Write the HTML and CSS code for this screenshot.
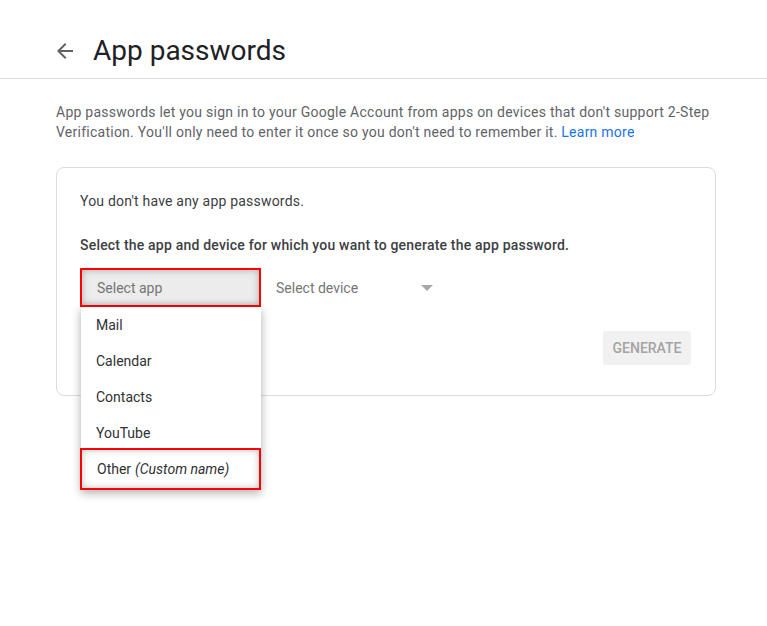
FILE: index.html
```html
<!DOCTYPE html>
<html>
<head>
<meta charset="utf-8">
<link rel="stylesheet" href="styles.css">
</head>
<body>
<header class="topbar">
  <svg class="back" width="24" height="24" viewBox="0 0 24 24"><path d="M20 11H7.83l5.59-5.59L12 4l-8 8 8 8 1.41-1.41L7.83 13H20v-2z" fill="#5f6368"/></svg>
  <h1 class="title">App passwords</h1>
</header>
<main class="content">
  <p class="intro">App passwords let you sign in to your Google Account from apps on devices that don't support 2-Step Verification. You'll only need to enter it once so you don't need to remember it. <a class="link" href="#">Learn more</a></p>
  <section class="card">
    <p class="none">You don't have any app passwords.</p>
    <p class="instr">Select the app and device for which you want to generate the app password.</p>
    <div class="selects">
      <div class="appsel">
        <div class="appbox">Select app</div>
        <ul class="menu">
          <li class="item">Mail</li>
          <li class="item">Calendar</li>
          <li class="item">Contacts</li>
          <li class="item">YouTube</li>
          <li class="item other">Other <em class="custom">(Custom name)</em></li>
        </ul>
      </div>
      <div class="devsel">
        <span>Select device</span>
        <span class="caret"></span>
      </div>
    </div>
    <div class="actions">
      <button class="gen">GENERATE</button>
    </div>
  </section>
</main>
</body>
</html>
```
FILE: styles.css
```css
* { box-sizing: border-box; }
html, body { min-height: 100%; height: 100%; }
body {
  margin: 0;
  font-family: Roboto, "Liberation Sans", Arial, sans-serif;
  background: #fff;
  color: #3c4043;
}
.topbar {
  height: 79px;
  display: flex;
  align-items: center;
  padding: 24px 0 0 53px;
  border-bottom: 1px solid #dadce0;
}
.back { display: block; }
.title {
  margin: 0 0 0 16px;
  font-size: 28px;
  font-weight: 400;
  color: #202124;
  line-height: 36px;
}
.content {
  padding: 0 51px 0 56px;
}
.intro {
  margin: 23px 0 25px;
  font-size: 14px;
  line-height: 20px;
  letter-spacing: 0.25px;
  color: #5f6368;
}
.link { color: #1a73e8; text-decoration: none; }
.card {
  border: 1px solid #dadce0;
  border-radius: 8px;
  padding: 23px 24px 30px 23px;
}
.none {
  margin: 0;
  font-size: 14px;
  line-height: 20px;
  letter-spacing: 0.2px;
  color: #3c4043;
}
.instr {
  margin: 24px 0 0;
  font-size: 14px;
  line-height: 20px;
  letter-spacing: 0.2px;
  font-weight: 500;
  color: #3c4043;
}
.selects {
  margin-top: 13px;
  display: flex;
  align-items: center;
}
.appsel {
  position: relative;
  width: 181px;
}
.appbox {
  height: 39px;
  border: 2px solid #f00;
  background: #ececec;
  box-shadow: inset 0 0 7px rgba(0,0,0,0.28);
  padding-left: 15px;
  display: flex;
  align-items: center;
  font-size: 14px;
  color: #757575;
}
.menu {
  position: absolute;
  top: 39px;
  left: 1px;
  width: 180px;
  margin: 0;
  padding: 0;
  list-style: none;
  background: #fff;
  box-shadow: 0 3px 9px rgba(0,0,0,0.32);
  z-index: 2;
}
.item {
  height: 36px;
  display: flex;
  align-items: center;
  padding-left: 15px;
  font-size: 14px;
  color: #303134;
}
.other {
  height: 42px;
  margin: -3px 0 0 -1px;
  padding-left: 15px;
  border: 2px solid #f00;
  box-shadow: inset 0 0 7px rgba(0,0,0,0.25);
}
.custom { margin-left: 4px; font-style: italic; }
.devsel {
  margin-left: 14px;
  width: 158px;
  height: 39px;
  display: flex;
  align-items: center;
  justify-content: space-between;
  padding-left: 1px;
  font-size: 14px;
  color: #757575;
}
.caret {
  width: 0;
  height: 0;
  border-left: 6px solid transparent;
  border-right: 6px solid transparent;
  border-top: 6px solid #a8a8a8;
}
.actions {
  margin-top: 24px;
  display: flex;
  justify-content: flex-end;
}
.gen {
  height: 34px;
  width: 88px;
  border: none;
  border-radius: 3px;
  background: #f1f1f1;
  color: #a4a4a4;
  font-family: inherit;
  font-size: 14px;
  font-weight: 500;
  padding: 0;
}
```
